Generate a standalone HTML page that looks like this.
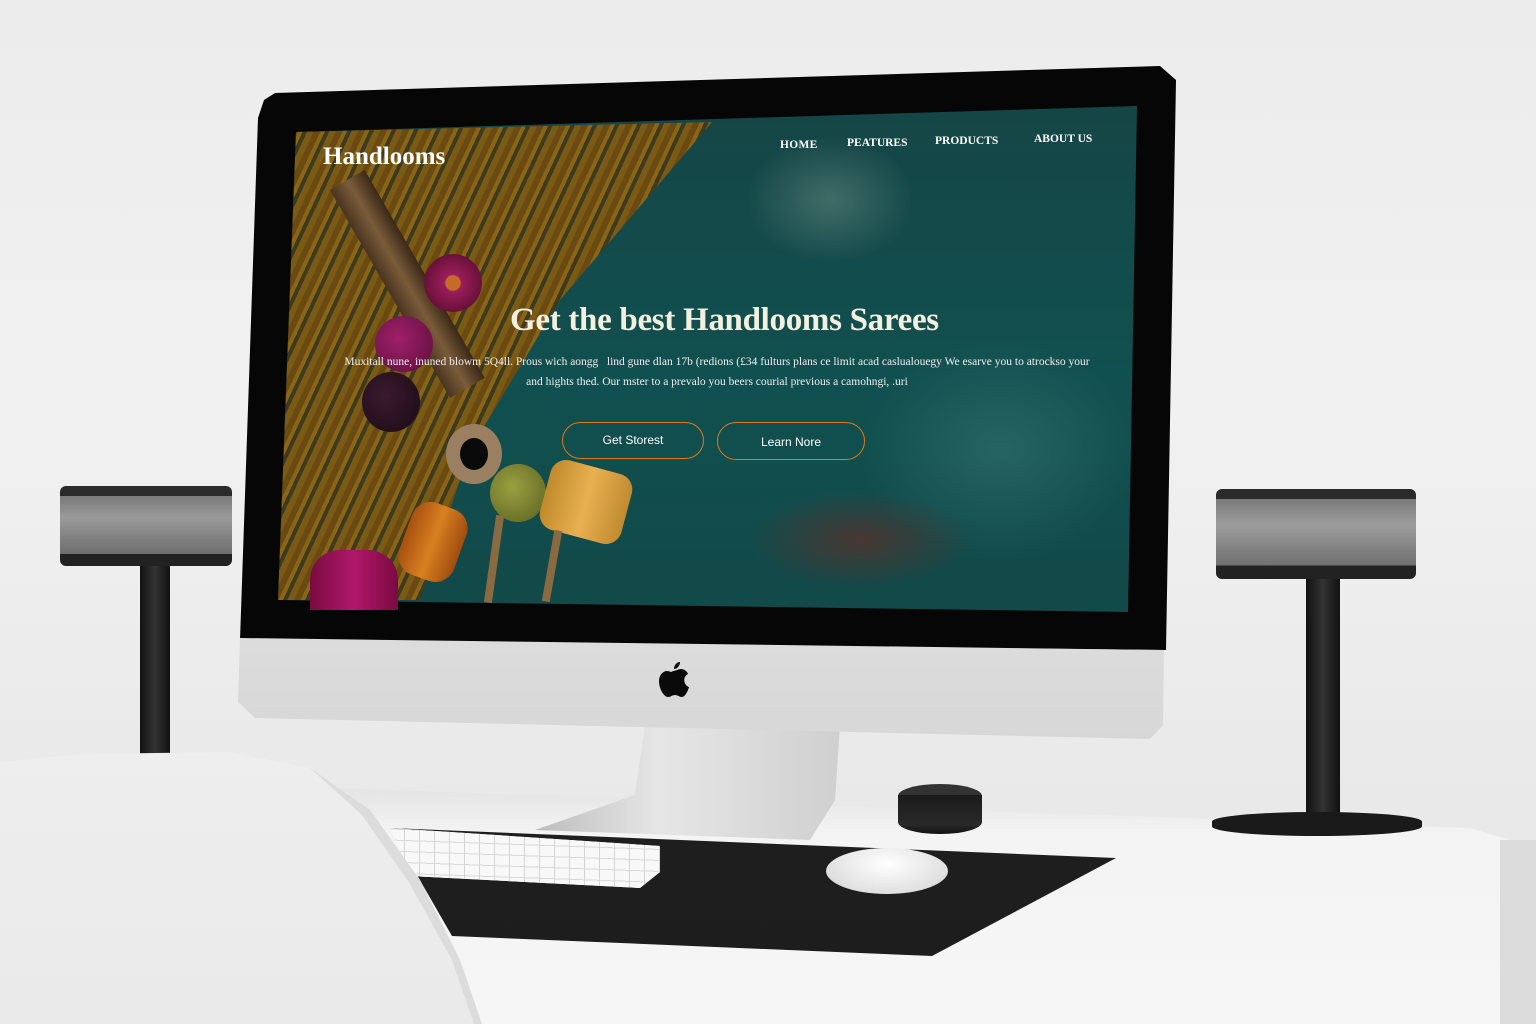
<!DOCTYPE html>
<html><head><meta charset="utf-8"><style>
*{margin:0;padding:0;box-sizing:border-box}
body{width:1536px;height:1024px;overflow:hidden;position:relative;background:linear-gradient(180deg,#ececec 0%,#f1f1f1 40%,#e9e9e9 78%);font-family:"Liberation Serif",serif}
.a{position:absolute}
</style></head><body>
<div class="a" style="left:0;top:788px;width:1536px;height:236px;background:linear-gradient(180deg,#e4e4e4 0%,#f4f4f4 20%,#f6f6f6 100%);clip-path:polygon(330px 0,1470px 40px,1536px 60px,1536px 236px,0 236px,0 0)"></div>
<div class="a" style="left:1500px;top:840px;width:36px;height:184px;background:#dcdcdc"></div>
<div class="a" style="left:140px;top:560px;width:30px;height:196px;background:linear-gradient(90deg,#111,#333,#111)"></div>
<div class="a" style="left:60px;top:486px;width:172px;height:80px;border-radius:6px;background:linear-gradient(180deg,#2a2a2a 0 10px,#7a7a7a 10px,#9a9a9a 40%,#6e6e6e 85%,#222 85%)"></div>
<div class="a" style="left:1306px;top:570px;width:34px;height:250px;background:linear-gradient(90deg,#111,#333,#111)"></div>
<div class="a" style="left:1212px;top:812px;width:210px;height:24px;border-radius:50%/40%;background:#1a1a1a"></div>
<div class="a" style="left:1216px;top:489px;width:200px;height:90px;border-radius:6px;background:linear-gradient(180deg,#2a2a2a 0 10px,#7a7a7a 10px,#9d9d9d 40%,#707070 85%,#222 85%)"></div>
<div class="a" style="left:535px;top:725px;width:310px;height:118px;background:linear-gradient(90deg,#bdbdbd,#e6e6e6 40%,#cfcfcf);clip-path:polygon(110px 0,305px 0,300px 75px,275px 115px,0 105px,100px 70px)"></div>
<div class="a" style="left:0;top:0;width:1536px;height:760px;background:#060606;clip-path:polygon(275px 93px,1160px 66px,1176px 80px,1166px 650px,240px 640px,258px 118px,264px 100px)"></div>
<div class="a" style="left:0;top:0;width:1536px;height:760px;background:linear-gradient(180deg,#dcdcdc,#e9e9e9 50%,#d6d6d6);clip-path:polygon(240px 638px,1164px 650px,1163px 725px,1150px 739px,255px 718px,238px 702px)"></div>
<svg class="a" style="left:656px;top:658px" width="34" height="44" viewBox="0 0 34 44"><path d="M24 4c0 4-3 7-6 7 0-4 3-7 6-7zM17 13c3 0 5-2 8-2 3 0 6 2 7 5-4 2-5 7-2 11 1 1 2 2 3 2-1 4-4 10-7 10-3 0-4-2-7-2-3 0-4 2-7 2-4 0-9-8-9-16 0-6 4-10 8-10 3 0 4 2 6 0z" fill="#0a0a0a"/></svg>
<div class="a" style="left:0;top:0;width:1536px;height:760px;clip-path:polygon(296px 132px,1137px 106px,1128px 612px,278px 600px);background:
radial-gradient(ellipse 120px 90px at 830px 200px,rgba(120,150,140,.45),transparent 70%),
radial-gradient(ellipse 160px 70px at 860px 540px,rgba(140,30,20,.45),transparent 70%),
radial-gradient(ellipse 200px 160px at 1000px 450px,rgba(60,120,120,.5),transparent 70%),
linear-gradient(180deg,#174242,#115050 50%,#124444)"></div>
<div class="a" style="left:0;top:0;width:1536px;height:760px;clip-path:polygon(296px 132px,712px 122px,560px 300px,470px 450px,420px 600px,278px 600px);background:repeating-linear-gradient(115deg,#6a4a10 0 6px,#8a6518 6px 10px,#3e3a1e 10px 14px,#7a5a14 14px 20px)"></div>
<div class="a" style="top:190px;width:40px;height:240px;background:linear-gradient(90deg,#4a3420,#7a5c3a,#3a2818);transform:rotate(-30deg);transform-origin:top left;left:330px"></div>
<div class="a" style="left:424px;top:254px;width:58px;height:58px;border-radius:50%;background:radial-gradient(circle,#c66a2a 0 18%,#9a1e5a 20%,#6a103a 70%,transparent 72%)"></div>
<div class="a" style="left:375px;top:316px;width:58px;height:56px;border-radius:50%;background:radial-gradient(circle at 40% 40%,#a0206a,#5a0e3a)"></div>
<div class="a" style="left:362px;top:372px;width:58px;height:60px;border-radius:50%;background:radial-gradient(circle at 40% 40%,#3a1a30,#1a0a14)"></div>
<div class="a" style="left:446px;top:424px;width:56px;height:60px;border-radius:50%;border:14px solid #9a8060;background:#0a0a0a"></div>
<div class="a" style="left:490px;top:464px;width:56px;height:58px;border-radius:50%;background:radial-gradient(circle at 40% 40%,#9aa040,#5a6020)"></div>
<div class="a" style="left:544px;top:466px;width:84px;height:72px;border-radius:16px;background:linear-gradient(90deg,#c08a2a,#e8b050,#c08a30);transform:rotate(15deg)"></div>
<div class="a" style="left:404px;top:504px;width:58px;height:76px;border-radius:20px;background:linear-gradient(90deg,#a85010,#d88020,#a04c10);transform:rotate(20deg)"></div>
<div class="a" style="left:310px;top:550px;width:88px;height:60px;border-radius:30px 30px 0 0;background:linear-gradient(90deg,#7a0a40,#b0186a,#7a0a40)"></div>
<div class="a" style="left:548px;top:530px;width:8px;height:72px;background:#8a6a40;transform:rotate(10deg)"></div>
<div class="a" style="left:490px;top:515px;width:8px;height:88px;background:#8a6a40;transform:rotate(8deg)"></div>
<div class="a" style="left:323px;top:143px;color:#fff;font-size:25px;font-weight:bold">Handlooms</div>
<div class="a" style="left:780px;top:139px;color:#fff;font-size:11.5px;font-weight:bold;letter-spacing:.3px">HOME</div>
<div class="a" style="left:847px;top:137px;color:#fff;font-size:11.5px;font-weight:bold">PEATURES</div>
<div class="a" style="left:935px;top:135px;color:#fff;font-size:11.5px;font-weight:bold">PRODUCTS</div>
<div class="a" style="left:1034px;top:133px;color:#fff;font-size:11.5px;font-weight:bold">ABOUT US</div>
<div class="a" style="left:510px;top:302px;color:#f4f0e0;font-size:33px;font-weight:bold;letter-spacing:-.3px">Get the best Handlooms Sarees</div>
<div class="a" style="left:330px;top:352px;width:774px;text-align:center;color:#eee;font-size:11.5px;line-height:20px;white-space:nowrap">Muxitall nune, inuned blowm 5Q4ll. Prous wich aongg&nbsp;&nbsp; lind gune dlan 17b (redions (£34 fulturs plans ce limit acad caslualouegy We esarve you to atrocksо your<br>and hights thed. Our mster to a prevalo you beers courial previous a camohngi, .uri</div>
<div class="a" style="left:562px;top:422px;width:142px;height:37px;border:1.5px solid #e07818;border-radius:19px;color:#fff;font:12px 'Liberation Sans',sans-serif;text-align:center;line-height:34px">Get Storest</div>
<div class="a" style="left:717px;top:422px;width:148px;height:38px;border:1.5px solid #e07818;border-radius:19px;color:#fff;font:12px 'Liberation Sans',sans-serif;text-align:center;line-height:38px">Learn Nore</div>
<div class="a" style="left:898px;top:784px;width:84px;height:50px;border-radius:42px/12px;background:linear-gradient(180deg,#333 0 22%,#1a1a1a 22%,#2a2a2a 80%,#111)"></div>
<div class="a" style="left:0;top:0;width:1536px;height:1024px;background:linear-gradient(180deg,#2a2a2a,#1c1c1c);clip-path:polygon(390px 828px,1116px 858px,932px 956px,452px 936px)"></div>
<div class="a" style="left:0;top:0;width:1536px;height:1024px;background:repeating-linear-gradient(90deg,transparent 0 14px,#d4d4d4 14px 15px),repeating-linear-gradient(2deg,#f8f8f8 0 10px,#d8d8d8 10px 11px),#eee;clip-path:polygon(390px 828px,660px 846px,660px 872px,640px 888px,410px 876px)"></div>
<div class="a" style="left:826px;top:848px;width:122px;height:46px;border-radius:50%;background:radial-gradient(ellipse at 50% 35%,#fff,#e0e0e0 70%,#aaa)"></div>
<div class="a" style="left:0;top:0;width:1536px;height:1024px;background:linear-gradient(180deg,#f8f8f8,#eaeaea);clip-path:polygon(0 762px,80px 754px,230px 752px,310px 768px,370px 810px,420px 880px,460px 960px,482px 1024px,0 1024px)"></div>
<div class="a" style="left:0;top:0;width:1536px;height:1024px;background:#dcdcdc;clip-path:polygon(310px 768px,370px 810px,420px 880px,460px 960px,482px 1024px,474px 1024px,452px 960px,410px 884px,362px 815px)"></div>
</body></html>
